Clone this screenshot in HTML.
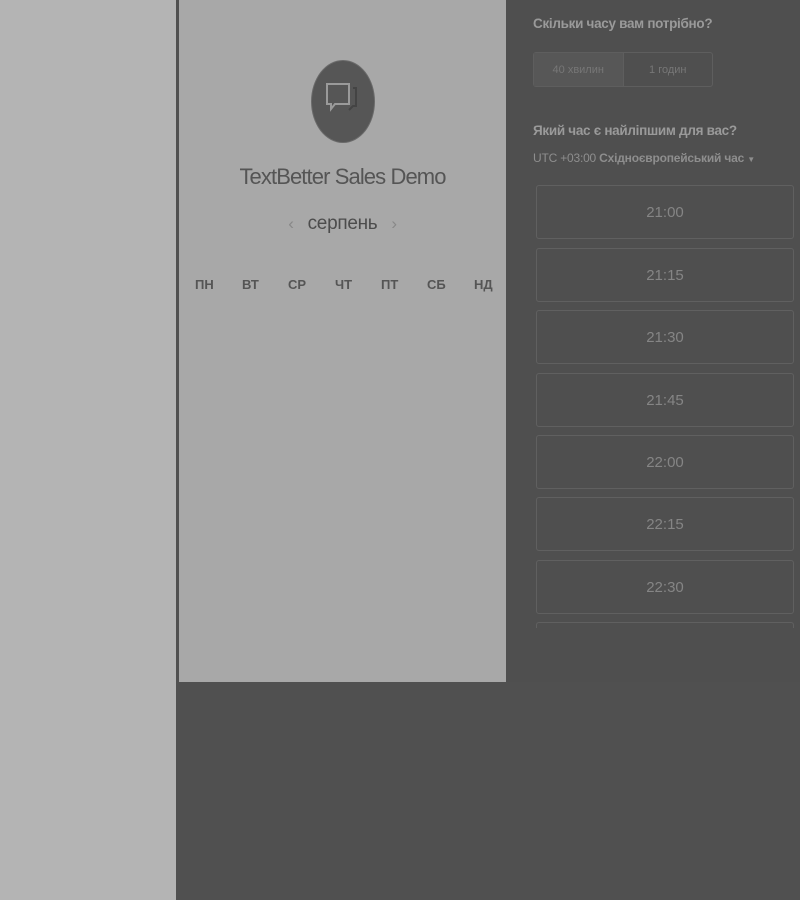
<!DOCTYPE html>
<html><head><meta charset="utf-8"><style>
*{margin:0;padding:0;box-sizing:border-box}
body{width:800px;height:900px;overflow:hidden;background:#b4b4b4;position:relative;font-family:"Liberation Sans",sans-serif}
.line{position:absolute;left:176px;top:0;width:3px;height:900px;background:#505050}
.mid{position:absolute;left:179px;top:0;width:327px;height:682px;background:#a8a8a8}
.right{position:absolute;left:506px;top:0;width:294px;height:682px;background:#4f4f4f}
.bot{position:absolute;left:179px;top:682px;width:621px;height:218px;background:#505050}
.logo{position:absolute;left:311px;top:60px;width:64px;height:83px;border-radius:50%;background:#565656;border:1px solid #6a6a6a}
.title{position:absolute;left:179px;width:327px;top:164px;text-align:center;font-size:22px;color:#555;letter-spacing:-0.9px}
.month{position:absolute;left:179px;width:327px;top:213px;text-align:center;font-size:19px;color:#4c4c4c;letter-spacing:-0.3px}
.month span{color:#888;font-size:17px;margin:0 14px}
.days{position:absolute;top:277px;font-size:13px;font-weight:bold;color:#555}
.h{position:absolute;left:533px;font-size:13.5px;font-weight:bold;color:#9a9a9a;letter-spacing:-0.3px}
.seg{position:absolute;left:533px;top:52px;width:180px;height:35px;border:1px solid #5e5e5e;border-radius:3px;display:flex;font-size:11px;color:#777}
.seg div{flex:1;display:flex;align-items:center;justify-content:center}
.seg div:first-child{background:#575757;border-right:1px solid #5e5e5e}
.tz{position:absolute;left:533px;top:151px;font-size:12px;color:#8e8e8e;letter-spacing:-0.2px}
.slot{position:absolute;left:536px;width:258px;height:54px;border:1px solid #606060;border-radius:3px;display:flex;align-items:center;justify-content:center;font-size:15px;color:#858585}
</style></head><body>
<div class="line"></div>
<div class="mid"></div>
<div class="right"></div>
<div class="bot"></div>
<div class="logo"><svg width="64" height="83" viewBox="0 0 64 83" style="position:absolute;left:-1px;top:-1px"><path d="M16 24h22v20H24l-4 5v-5h-4z" fill="none" stroke="#9a9a9a" stroke-width="2"/><path d="M42 28h3v18h-3l-4 4" fill="none" stroke="#444" stroke-width="2"/></svg></div>
<div class="title">TextBetter Sales Demo</div>
<div class="month"><span>‹</span>серпень<span>›</span></div>
<div class="days" style="left:195px">ПН</div>
<div class="days" style="left:242px">ВТ</div>
<div class="days" style="left:288px">СР</div>
<div class="days" style="left:335px">ЧТ</div>
<div class="days" style="left:381px">ПТ</div>
<div class="days" style="left:427px">СБ</div>
<div class="days" style="left:474px">НД</div>
<div class="h" style="top:16px">Скільки часу вам потрібно?</div>
<div class="seg"><div>40 хвилин</div><div>1 годин</div></div>
<div class="h" style="top:123px">Який час є найліпшим для вас?</div>
<div class="tz">UTC +03:00 <b>Східноєвропейський час</b> <span style="font-size:8px">▼</span></div>
<div class="slot" style="top:185px">21:00</div>
<div class="slot" style="top:248px">21:15</div>
<div class="slot" style="top:310px">21:30</div>
<div class="slot" style="top:373px">21:45</div>
<div class="slot" style="top:435px">22:00</div>
<div class="slot" style="top:497px">22:15</div>
<div class="slot" style="top:560px">22:30</div>
<div class="slot" style="top:622px;height:6px;border-bottom:none;border-radius:3px 3px 0 0"></div>
</body></html>
